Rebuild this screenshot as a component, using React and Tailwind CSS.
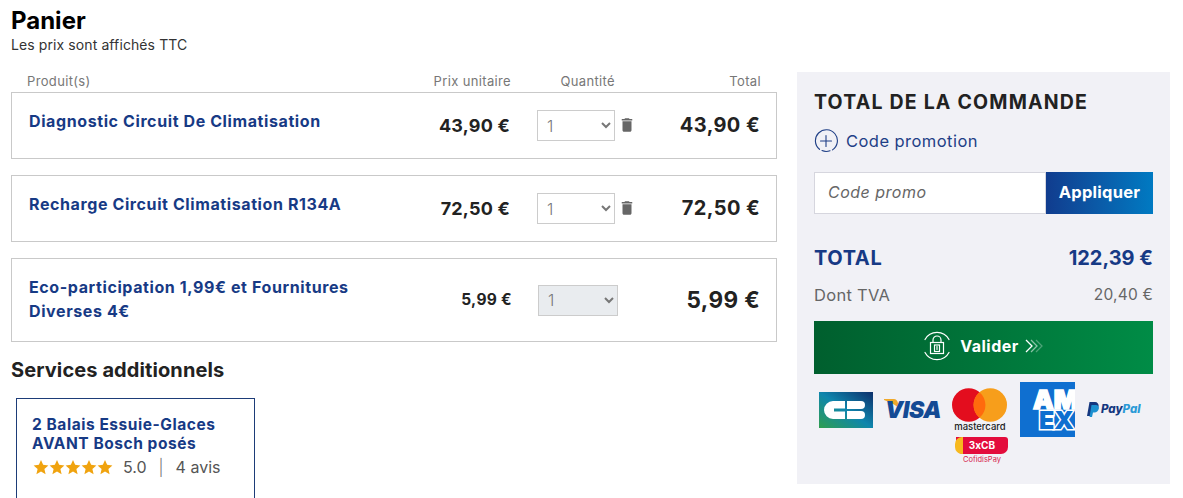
import React from 'react';
import { MdDelete } from 'react-icons/md';

const Star = () => (
  <svg width="16" height="16" viewBox="0 0 24 24" className="fill-[#f0a30f]">
    <path d="M12 1.500l3.200 7.300 7.900.8-6 5.300 1.800 7.800L12 18.600l-6.900 4.100 1.800-7.800-6-5.300 7.900-.8z" />
  </svg>
);

const PlusCircle = () => (
  <svg width="24" height="24" viewBox="0 0 24 24" fill="none" stroke="#1f3f86" strokeWidth="1.1" strokeLinecap="round">
    <path d="M5.500 20.300A11 11 0 1 1 18.500 20.900" />
    <path d="M8 21.600a11 11 0 0 0 8 .1" />
    <path d="M12 6.500v11M6.500 12h11" />
  </svg>
);

const LockBadge = () => (
  <svg width="30" height="30" viewBox="0 0 30 30" fill="none" stroke="#fff" strokeWidth="1.2" strokeLinecap="round">
    <path d="M3 8.500A13.600 13.600 0 0 1 27 8.500" />
    <path d="M3 21.500A13.600 13.600 0 0 0 27 21.500" />
    <rect x="8.500" y="11.500" width="13" height="11" />
    <path d="M11 11.500V9a4 4 0 0 1 8 0v2.500" />
    <rect x="12.500" y="14" width="5" height="6.500" />
    <path d="M15 15.500v3" />
  </svg>
);

const Chevrons = () => (
  <svg width="20" height="14" viewBox="0 0 20 14" fill="none" strokeWidth="1.3">
    <path d="M1 1l6 6-6 6" stroke="#fff" />
    <path d="M6 1l6 6-6 6" stroke="#fff" strokeOpacity="0.55" />
    <path d="M11 1l6 6-6 6" stroke="#fff" strokeOpacity="0.3" />
  </svg>
);

const CbLogo = () => (
  <svg width="54" height="36" viewBox="0 0 54 36">
    <defs>
      <linearGradient id="cbg" x1="0" y1="1" x2="1" y2="0">
        <stop offset="0" stopColor="#2f9e4f" />
        <stop offset="0.5" stopColor="#0f86ad" />
        <stop offset="1" stopColor="#0d2f6b" />
      </linearGradient>
    </defs>
    <rect width="54" height="36" fill="url(#cbg)" />
    <path d="M26 9H14a9 9 0 0 0 0 18H26V19.500H15V16.500H26z" fill="#fff" />
    <path d="M28 9H42a4 4 0 0 1 0 8H28z" fill="#fff" />
    <path d="M28 19H42a4 4 0 0 1 0 8H28z" fill="#fff" />
  </svg>
);

const VisaLogo = () => (
  <div className="relative mt-[15px] ml-[12px] text-[23px] leading-[26px] font-black italic text-[#144a94] tracking-[-0.5px]">
    <svg width="16" height="10" viewBox="0 0 16 10" className="absolute -left-[1px] top-[2px]">
      <path d="M0 0H10C12 0 13 1 14 4L16 10C12 6 6 3 0 1z" fill="#f0a92c" />
    </svg>
    <span className="relative">VISA</span>
  </div>
);

const MastercardLogo = () => (
  <div className="flex flex-col items-center w-[56px] mt-[6px] ml-[11px]">
    <svg width="55" height="34" viewBox="0 0 56 34">
      <circle cx="17" cy="17" r="17" fill="#e30d1e" />
      <circle cx="39" cy="17" r="17" fill="#f79e1b" />
      <path d="M28 4a17 17 0 0 1 0 26 17 17 0 0 1 0-26z" fill="#ff6a0d" />
    </svg>
    <span className="text-[9.500px] leading-[12px] mt-[-1px] font-medium text-[#222]">mastercard</span>
    <div className="relative mt-[4px] ml-[4px] w-[52px] h-[17px] rounded-b-[7px] rounded-tr-[3px] bg-[#e30c3c] text-white text-[10px] leading-[16px] font-bold text-center">
      <span className="absolute -left-[1px] top-0 h-[17px] w-[8px] rounded-l-[7px] bg-[#f7b91e]" />
      <span className="relative">3xCB</span>
    </div>
    <span className="text-[7.500px] leading-[10px] mt-[1px] ml-[4px] text-[#d6244f]">CofidisPay</span>
  </div>
);

const AmexLogo = () => (
  <svg width="55" height="55" viewBox="0 0 55 55" className="shrink-0">
    <rect width="55" height="55" fill="#0f6fd0" />
    <g fontFamily="Inter, sans-serif" fontWeight="900" fontSize="26" fill="#fff" stroke="#fff" strokeWidth="1.500" strokeLinejoin="miter">
      <text x="13" y="27">AM</text>
    </g>
    <g fontFamily="Inter, sans-serif" fontWeight="900" fontSize="25" fill="#0f6fd0" stroke="#fff" strokeWidth="3" style={{ paintOrder: 'stroke' }}>
      <text x="19" y="47">EX</text>
    </g>
  </svg>
);

const PaypalLogo = () => (
  <div className="flex items-center gap-[2px]">
    <svg width="12" height="15" viewBox="0 0 12 15">
      <path d="M2.500 0H8a3.600 3.600 0 0 1 3.500 4.500C11 7.500 9 9 6.500 9H4.500L3.500 14H0z" fill="#14377f" />
      <path d="M4.500 3H9a3 3 0 0 1 2.800 3.800C11.300 9.200 9.500 10.500 7.500 10.500H6L5 15H2.500z" fill="#1c90d0" />
    </svg>
    <span className="text-[11.500px] font-extrabold italic text-[#14377f]">
      Pay<span className="text-[#2b9ad6]">Pal</span>
    </span>
  </div>
);

const selectClass = 'h-[31px] border border-[#ccc] pl-[5px] text-[16px] font-light text-[#777] rounded-none';

const CartRow = ({ name, price, total, last }) => (
  <div className={`flex items-center border border-[#c9c9c9] pl-[17px] pr-[16px] ${last ? 'h-[84px]' : 'h-[67px]'}`}>
    <div className={`w-[345px] text-[16px] leading-[24px] font-bold text-[#173a85] tracking-[0.6px] ${last ? '-mt-[2px]' : '-mt-[10px]'}`}>
      {name}
    </div>
    {last ? (
      <>
        <div className="w-[138px] text-right text-[15.500px] font-bold text-[#222] tracking-[0.3px]">{price}</div>
        <select disabled className={`${selectClass} ml-[26px] w-[80px] bg-[#e9ecef]`}>
          <option>1</option>
        </select>
      </>
    ) : (
      <>
        <div className="w-[136px] -mt-[1px] text-right text-[18px] font-bold text-[#222] tracking-[0.2px]">{price}</div>
        <select className={`${selectClass} ml-[27px] w-[78px] bg-white`}>
          <option>1</option>
        </select>
        <MdDelete size={18} className="ml-[3px] -mt-[1px] text-[#666]" />
      </>
    )}
    <div className={`flex-1 -mt-[1px] text-right font-bold text-[#222] tracking-[0.4px] ${last ? 'text-[22.500px]' : 'text-[20px]'}`}>
      {total}
    </div>
  </div>
);

export default function App() {
  return (
    <div className="h-[498px] overflow-hidden bg-white font-['Inter',sans-serif] pl-[11px]">
      {/* Page title */}
      <div className="h-[72px] pt-[7px]">
        <h1 className="text-[24px] leading-[28px] font-bold text-black">Panier</h1>
        <p className="text-[14px] leading-[20px] text-[#333] tracking-[0.1px]">Les prix sont affichés TTC</p>
      </div>

      <div className="flex gap-[20px] items-start">
        {/* Cart column */}
        <div className="w-[766px]">
          <div className="flex h-[20px] items-center text-[13px] text-[#777] tracking-[0.35px]">
            <span className="pl-[16px] w-[350px]">Produit(s)</span>
            <span className="w-[150px] text-right">Prix unitaire</span>
            <span className="w-[104px] text-right">Quantité</span>
            <span className="w-[146px] text-right">Total</span>
          </div>
          <div className="flex flex-col gap-[16px]">
            <CartRow name="Diagnostic Circuit De Climatisation" price="43,90 €" total="43,90 €" />
            <CartRow name="Recharge Circuit Climatisation R134A" price="72,50 €" total="72,50 €" />
            <CartRow name="Eco-participation 1,99€ et Fournitures Diverses 4€" price="5,99 €" total="5,99 €" last />
          </div>

          <h2 className="mt-[14px] text-[20px] leading-[28px] font-bold text-[#222] tracking-[0.1px]">Services additionnels</h2>
          <div className="mt-[14px] ml-[5px] w-[239px] h-[120px] border border-[#1d3c78] pt-[16px] px-[15px]">
            <div className="text-[15.500px] leading-[19px] font-bold text-[#173a85] tracking-[0.55px]">
              2 Balais Essuie-Glaces AVANT Bosch posés
            </div>
            <div className="flex items-center h-[24px] mt-[2px] pl-[1px] text-[16px] text-[#555]">
              <Star />
              <Star />
              <Star />
              <Star />
              <Star />
              <span className="ml-[10px]">5.0</span>
              <span className="ml-[12px] font-light text-[#777]">|</span>
              <span className="ml-[12px]">4 avis</span>
            </div>
          </div>
        </div>

        {/* Order summary */}
        <div className="w-[373px] h-[412px] bg-[#f1f1f6] px-[17px] pt-[18px]">
          <h2 className="text-[19.500px] leading-[24px] font-bold uppercase text-[#222] tracking-[1.2px]">
            Total de la commande
          </h2>
          <div className="flex items-center gap-[8px] mt-[15px] text-[#1f3f86] text-[16.500px] leading-[24px] tracking-[0.45px]">
            <PlusCircle />
            <span>Code promotion</span>
          </div>
          <div className="flex mt-[19px] h-[42px]">
            <div className="flex-1 flex items-center bg-white border border-[#d6d6de] pl-[13px] pb-[2px] text-[16px] italic text-[#666] tracking-[0.5px]">
              Code promo
            </div>
            <div className="w-[107px] flex items-center justify-center pb-[1px] bg-gradient-to-r from-[#103c8e] to-[#007ac2] text-white text-[16.500px] font-bold tracking-[0.25px]">
              Appliquer
            </div>
          </div>
          <div className="flex justify-between items-center mt-[30px] h-[28px] text-[20px] font-bold text-[#173a85]">
            <span className="tracking-[0.6px]">TOTAL</span>
            <span>122,39 €</span>
          </div>
          <div className="flex justify-between items-center mt-[9px] h-[28px] text-[#666]">
            <span className="text-[16.500px] tracking-[0.3px]">Dont TVA</span>
            <span className="text-[15.500px] tracking-[0.2px]">20,40 €</span>
          </div>
          <div className="flex items-center justify-center mt-[12px] h-[53px] pb-[3px] bg-gradient-to-r from-[#005f2e] to-[#008c46] text-white text-[16px] font-bold tracking-[0.5px]">
            <LockBadge />
            <span className="ml-[8px] mr-[6px]">Valider</span>
            <Chevrons />
          </div>
          {/* Payment logos */}
          <div className="flex mt-[8px] pl-[5px] items-start">
            <div className="mt-[10px]">
              <CbLogo />
            </div>
            <VisaLogo />
            <MastercardLogo />
            <div className="ml-[12px]">
              <AmexLogo />
            </div>
            <div className="ml-[12px] mt-[19px]">
              <PaypalLogo />
            </div>
          </div>
        </div>
      </div>
    </div>
  );
}
